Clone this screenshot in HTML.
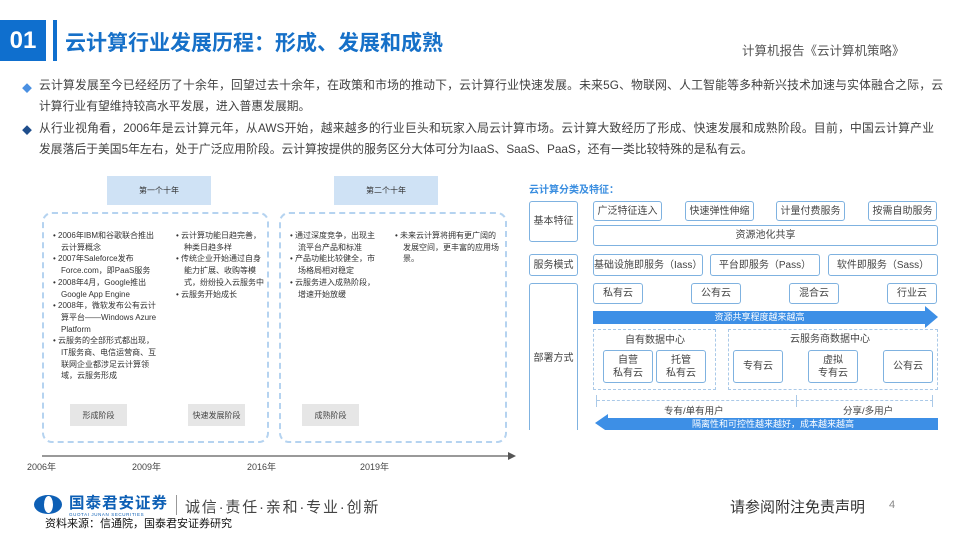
<!DOCTYPE html><html><head><meta charset="utf-8"><style>
*{margin:0;padding:0;box-sizing:border-box}
body{width:959px;height:539px;position:relative;background:#fff;font-family:"Liberation Sans","Noto Sans CJK SC",sans-serif;color:#333;overflow:hidden}
.a{position:absolute}
.j{text-align:justify;text-align-last:justify;white-space:nowrap}
.ln{font-size:11.8px;color:#404040;line-height:16px}
.bx{position:absolute;border:1px solid #7fb2e0;border-radius:3px;font-size:10px;color:#444;display:flex;align-items:center;justify-content:center;text-align:center;line-height:13px;background:#fff}
.li{font-size:8px;color:#333;line-height:11.7px}
.li div{padding-left:8px;text-indent:-8px}
.st{position:absolute;background:#e6e6e6;font-size:8px;color:#444;display:flex;align-items:center;justify-content:center}
</style></head><body>
<div class="a" style="left:0;top:20px;width:46px;height:41px;background:#0f6fce;color:#fff;font-weight:bold;font-size:24px;display:flex;align-items:center;justify-content:center">01</div>
<div class="a" style="left:53px;top:20px;width:4px;height:41px;background:#0f6fce"></div>
<div class="a" style="left:65px;top:27px;font-size:21px;font-weight:bold;color:#1670c8">云计算行业发展历程：形成、发展和成熟</div>
<div class="a" style="left:742px;top:40px;font-size:12.5px;color:#555">计算机报告《云计算机策略》</div>

<div class="a" style="left:22px;top:80px;color:#4a90e2;font-size:10px">◆</div>
<div class="a ln j" style="left:39px;top:77px;width:904px">云计算发展至今已经经历了十余年，回望过去十余年，在政策和市场的推动下，云计算行业快速发展。未来5G、物联网、人工智能等多种新兴技术加速与实体融合之际，云</div>
<div class="a ln" style="left:39px;top:98px">计算行业有望维持较高水平发展，进入普惠发展期。</div>
<div class="a" style="left:22px;top:122px;color:#1f4e8c;font-size:10px">◆</div>
<div class="a ln j" style="left:39px;top:120px;width:895px">从行业视角看，2006年是云计算元年，从AWS开始，越来越多的行业巨头和玩家入局云计算市场。云计算大致经历了形成、快速发展和成熟阶段。目前，中国云计算产业</div>
<div class="a ln" style="left:39px;top:141px">发展落后于美国5年左右，处于广泛应用阶段。云计算按提供的服务区分大体可分为IaaS、SaaS、PaaS，还有一类比较特殊的是私有云。</div>

<!-- left diagram -->
<div class="a" style="left:107px;top:176px;width:104px;height:29px;background:#cfe2f5;font-size:8px;display:flex;align-items:center;justify-content:center">第一个十年</div>
<div class="a" style="left:334px;top:176px;width:104px;height:29px;background:#cfe2f5;font-size:8px;display:flex;align-items:center;justify-content:center">第二个十年</div>
<div class="a" style="left:42px;top:212px;width:227px;height:231px;border:2px dashed #b5d3f0;border-radius:10px"></div>
<div class="a" style="left:279px;top:212px;width:228px;height:231px;border:2px dashed #b5d3f0;border-radius:10px"></div>
<div class="a li" style="left:53px;top:230px;width:105px"><div>• 2006年IBM和谷歌联合推出云计算概念</div><div>• 2007年Saleforce发布Force.com，即PaaS服务</div><div>• 2008年4月，Google推出Google App Engine</div><div>• 2008年，微软发布公有云计算平台——Windows Azure Platform</div><div>• 云服务的全部形式都出现，IT服务商、电信运营商、互联网企业都涉足云计算领域，云服务形成</div></div>
<div class="a li" style="left:176px;top:230px;width:92px"><div>• 云计算功能日趋完善，种类日趋多样</div><div>• 传统企业开始通过自身能力扩展、收购等模式，纷纷投入云服务中</div><div>• 云服务开始成长</div></div>
<div class="a li" style="left:290px;top:230px;width:92px"><div>• 通过深度竞争，出现主流平台产品和标准</div><div>• 产品功能比较健全，市场格局相对稳定</div><div>• 云服务进入成熟阶段，增速开始放缓</div></div>
<div class="a li" style="left:395px;top:230px;width:108px"><div>• 未来云计算将拥有更广阔的发展空间，更丰富的应用场景。</div></div>
<div class="st" style="left:70px;top:404px;width:57px;height:22px">形成阶段</div>
<div class="st" style="left:188px;top:404px;width:57px;height:22px">快速发展阶段</div>
<div class="st" style="left:302px;top:404px;width:57px;height:22px">成熟阶段</div>
<div class="a" style="left:42px;top:455px;width:468px;height:2px;background:#999"></div>
<div class="a" style="left:508px;top:452px;width:0;height:0;border-left:8px solid #555;border-top:4px solid transparent;border-bottom:4px solid transparent"></div>
<div class="a" style="left:27px;top:460px;font-size:9px;color:#444">2006年</div>
<div class="a" style="left:132px;top:460px;font-size:9px;color:#444">2009年</div>
<div class="a" style="left:247px;top:460px;font-size:9px;color:#444">2016年</div>
<div class="a" style="left:360px;top:460px;font-size:9px;color:#444">2019年</div>

<!-- right diagram -->
<div class="a" style="left:529px;top:181px;font-size:10px;font-weight:bold;color:#3a8ee0">云计算分类及特征：</div>
<div class="bx" style="left:529px;top:201px;width:49px;height:41px">基本特征</div>
<div class="bx" style="left:529px;top:254px;width:49px;height:22px">服务模式</div>
<div class="bx" style="left:529px;top:283px;width:49px;height:150px">部署方式</div>
<div class="bx" style="left:593px;top:201px;width:69px;height:20px">广泛特征连入</div>
<div class="bx" style="left:685px;top:201px;width:69px;height:20px">快速弹性伸缩</div>
<div class="bx" style="left:776px;top:201px;width:69px;height:20px">计量付费服务</div>
<div class="bx" style="left:868px;top:201px;width:69px;height:20px">按需自助服务</div>
<div class="bx" style="left:593px;top:225px;width:345px;height:21px">资源池化共享</div>
<div class="bx" style="left:593px;top:254px;width:110px;height:22px">基础设施即服务（Iass）</div>
<div class="bx" style="left:710px;top:254px;width:110px;height:22px">平台即服务（Pass）</div>
<div class="bx" style="left:828px;top:254px;width:110px;height:22px">软件即服务（Sass）</div>
<div class="bx" style="left:593px;top:283px;width:50px;height:21px">私有云</div>
<div class="bx" style="left:691px;top:283px;width:50px;height:21px">公有云</div>
<div class="bx" style="left:789px;top:283px;width:50px;height:21px">混合云</div>
<div class="bx" style="left:887px;top:283px;width:50px;height:21px">行业云</div>
<div class="a" style="left:593px;top:311px;width:333px;height:13px;background:#3d8fe6;color:#fff;font-size:9px;text-align:center;line-height:13px">资源共享程度越来越高</div>
<div class="a" style="left:925px;top:306px;border-left:13px solid #3d8fe6;border-top:11px solid transparent;border-bottom:11px solid transparent"></div>
<div class="a" style="left:593px;top:329px;width:123px;height:61px;border:1px dashed #aac9e8"></div>
<div class="a" style="left:728px;top:329px;width:210px;height:61px;border:1px dashed #aac9e8"></div>
<div class="a" style="left:625px;top:331px;font-size:10px;color:#444">自有数据中心</div>
<div class="a" style="left:790px;top:330px;font-size:10px;color:#444">云服务商数据中心</div>
<div class="bx" style="left:603px;top:350px;width:50px;height:33px">自营<br>私有云</div>
<div class="bx" style="left:656px;top:350px;width:50px;height:33px">托管<br>私有云</div>
<div class="bx" style="left:733px;top:350px;width:50px;height:33px">专有云</div>
<div class="bx" style="left:808px;top:350px;width:50px;height:33px">虚拟<br>专有云</div>
<div class="bx" style="left:883px;top:350px;width:50px;height:33px">公有云</div>
<div class="a" style="left:597px;top:400px;width:336px;border-top:1px dashed #aac9e8"></div>
<div class="a" style="left:596px;top:395px;width:1px;height:12px;background:#aac9e8"></div>
<div class="a" style="left:796px;top:395px;width:1px;height:12px;background:#aac9e8"></div>
<div class="a" style="left:932px;top:395px;width:1px;height:12px;background:#aac9e8"></div>
<div class="a" style="left:664px;top:403px;font-size:9.5px;color:#444">专有/单有用户</div>
<div class="a" style="left:843px;top:403px;font-size:9.5px;color:#444">分享/多用户</div>
<div class="a" style="left:608px;top:418px;width:330px;height:12px;background:#3d8fe6;color:#fff;font-size:9px;text-align:center;line-height:12px;overflow:hidden">隔离性和可控性越来越好，成本越来越高</div>
<div class="a" style="left:595px;top:414px;border-right:13px solid #3d8fe6;border-top:9px solid transparent;border-bottom:9px solid transparent;height:0"></div>
<div class="a" style="left:528px;top:430px;width:420px;height:10px;background:#fff"></div>

<!-- footer -->
<div class="a" style="left:34px;top:495px;width:28px;height:19px;border-radius:50%;background:#0d5fb5"></div>
<div class="a" style="left:44px;top:496px;width:9px;height:17px;border-radius:50%;background:#fff"></div>
<div class="a" style="left:69px;top:495px;font-size:15.5px;font-weight:bold;color:#0d5fb5;letter-spacing:1px;line-height:17px">国泰君安证券</div>
<div class="a" style="left:69px;top:512px;font-size:4.5px;color:#0d5fb5;letter-spacing:0.6px">GUOTAI JUNAN SECURITIES</div>
<div class="a" style="left:176px;top:495px;width:1px;height:20px;background:#999"></div>
<div class="a" style="left:185px;top:496px;font-size:15px;color:#444;white-space:nowrap;letter-spacing:1.8px">诚信·责任·亲和·专业·创新</div>
<div class="a" style="left:45px;top:515px;font-size:11px;color:#111">资料来源：信通院，国泰君安证券研究</div>
<div class="a" style="left:730px;top:496px;font-size:15px;color:#333">请参阅附注免责声明</div>
<div class="a" style="left:889px;top:499px;font-size:11px;color:#888">4</div>
</body></html>
